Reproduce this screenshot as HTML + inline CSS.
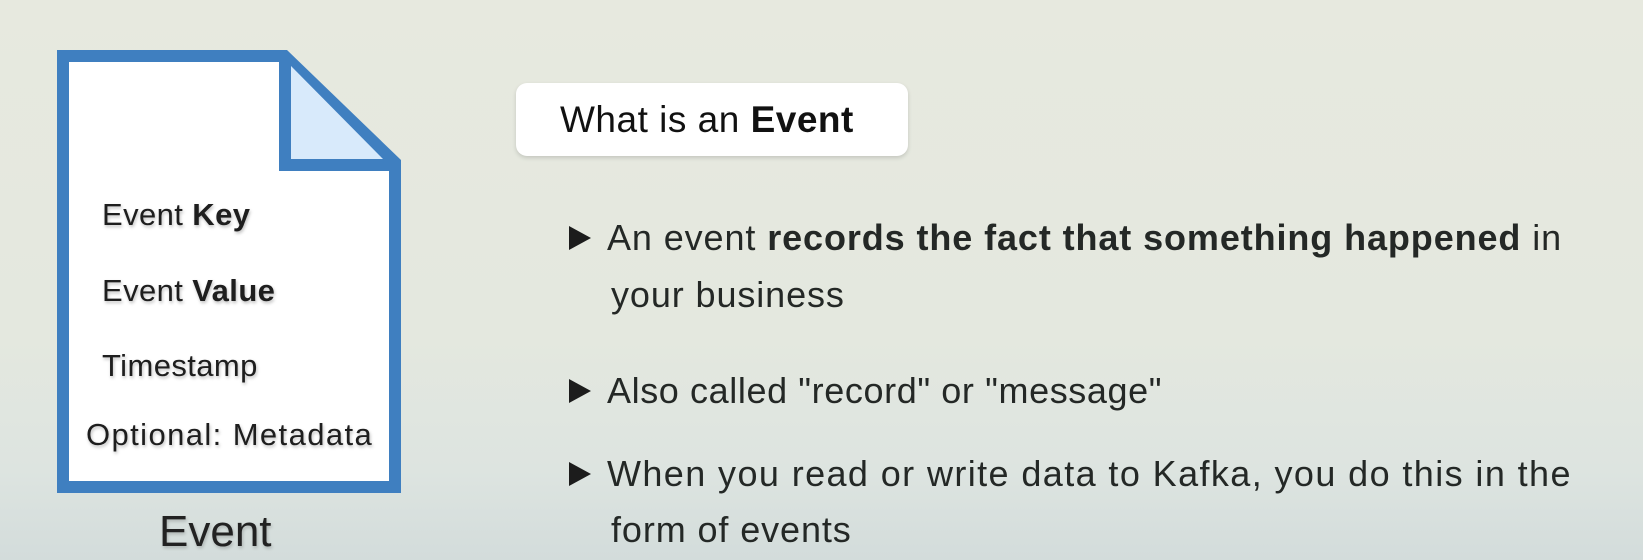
<!DOCTYPE html>
<html><head><meta charset="utf-8"><style>
html,body{margin:0;padding:0}
body{width:1643px;height:560px;position:relative;overflow:hidden;font-family:"Liberation Sans",sans-serif;color:#222;
background:linear-gradient(180deg,#e7e9df 0%,#e4e8df 60%,#dde4e0 84%,#d3dcdb 100%);}
.t{position:absolute;white-space:nowrap;line-height:1}
.d{font-size:31px;letter-spacing:0.4px;color:#1e1e1e;text-shadow:1px 2px 3px rgba(0,0,0,.25)}
.b{font-size:36px;letter-spacing:0.9px;color:#242826}
.tri{position:absolute;width:0;height:0;border-left:22px solid #1c1c1c;border-top:12px solid transparent;border-bottom:12px solid transparent}
</style></head><body>
<svg style="position:absolute;left:0;top:0" width="460" height="560">
<polygon points="57,50 287,50 401,160 401,493 57,493" fill="#3f7fc0"/>
<polygon points="69,62 279,62 279,171 389,171 389,481 69,481" fill="#fff"/>
<polygon points="291,66 291,159 383,159" fill="#d8eafb"/>
</svg>
<div class="t d" style="left:102px;top:199px">Event <b>Key</b></div>
<div class="t d" style="left:102px;top:275px">Event <b>Value</b></div>
<div class="t d" style="left:102px;top:350px">Timestamp</div>
<div class="t d" style="left:86px;top:419px;letter-spacing:1.4px">Optional: Metadata</div>
<div class="t" style="left:159px;top:510px;font-size:44px;color:#222;text-shadow:1px 2px 3px rgba(0,0,0,.2)">Event</div>
<div style="position:absolute;left:516px;top:83px;width:392px;height:73px;background:#fff;border-radius:11px;box-shadow:0 2px 4px rgba(0,0,0,.15)"></div>
<div class="t" style="left:560px;top:101px;font-size:37px;letter-spacing:0.5px;color:#111">What is an <b>Event</b></div>
<div class="tri" style="left:569px;top:226px"></div>
<div class="t b" style="left:607px;top:220px">An event <b>records the fact that something happened</b> in</div>
<div class="t b" style="left:611px;top:277px">your business</div>
<div class="tri" style="left:569px;top:379px"></div>
<div class="t b" style="left:607px;top:373px;letter-spacing:0.6px">Also called "record" or "message"</div>
<div class="tri" style="left:569px;top:462px"></div>
<div class="t b" style="left:607px;top:456px;letter-spacing:1.4px">When you read or write data to Kafka, you do this in the</div>
<div class="t b" style="left:611px;top:512px">form of events</div>
</body></html>
